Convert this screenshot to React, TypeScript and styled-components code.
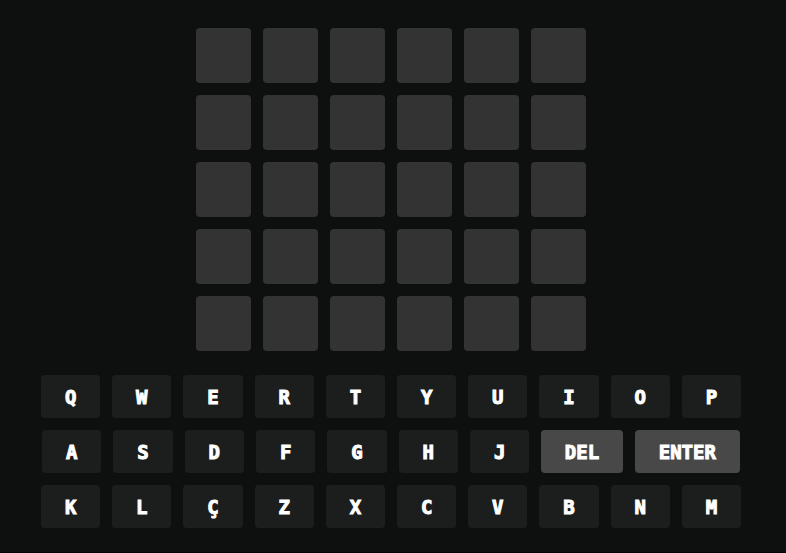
import React from "react";
import styled, { createGlobalStyle } from "styled-components";

const GlobalStyle = createGlobalStyle`
  *, *::before, *::after {
    box-sizing: border-box;
  }

  body {
    margin: 0;
    background: #0e100f;
  }
`;

const Page = styled.main`
  display: flex;
  flex-direction: column;
  align-items: center;
  gap: 24px;
  min-height: 100vh;
  padding: 28px 4px 24px 0;
  border-bottom: 1px solid #050304;
  background: #0e100f;
`;

const Board = styled.section`
  display: flex;
  flex-direction: column;
  gap: 12px;
`;

const BoardRow = styled.div`
  display: flex;
  gap: 12px;
`;

const Tile = styled.div`
  width: 55px;
  height: 55px;
  border-radius: 4px;
  background: #333333;
`;

const Keyboard = styled.section`
  display: flex;
  flex-direction: column;
  align-items: center;
  gap: 12px;
  width: 100%;
`;

const KeyRow = styled.div<{ $maxWidth: number }>`
  display: flex;
  gap: 12px;
  width: 100%;
  max-width: ${({ $maxWidth }) => $maxWidth}px;
`;

const Key = styled.button<{ $basis?: number; $action?: boolean }>`
  display: flex;
  flex: 1 1 ${({ $basis = 59 }) => $basis}px;
  align-items: center;
  justify-content: center;
  min-width: 0;
  height: 43px;
  padding: 0;
  border: 0;
  border-radius: 4px;
  background: ${({ $action }) => ($action ? "#484848" : "#1c1e1d")};
  color: #ffffff;
  font: 700 19px/24px "DejaVu Sans Mono", monospace;
  -webkit-text-stroke: 1px #ffffff;
  cursor: pointer;
`;

type KeyDef = { label: string; basis?: number; action?: boolean };

const letters = (text: string): KeyDef[] => [...text].map((label) => ({ label }));

const keyRows: { maxWidth: number; keys: KeyDef[] }[] = [
  { maxWidth: 700, keys: letters("QWERTYUIOP") },
  {
    maxWidth: 698,
    keys: [
      ...letters("ASDFGHJ"),
      { label: "DEL", basis: 81, action: true },
      { label: "ENTER", basis: 105, action: true },
    ],
  },
  { maxWidth: 700, keys: letters("KLÇZXCVBNM") },
];

const ATTEMPTS = 5;
const WORD_LENGTH = 6;

export default function App() {
  return (
    <>
      <GlobalStyle />
      <Page>
        <Board>
          {Array.from({ length: ATTEMPTS }, (_, row) => (
            <BoardRow key={row}>
              {Array.from({ length: WORD_LENGTH }, (_, column) => (
                <Tile key={column} />
              ))}
            </BoardRow>
          ))}
        </Board>
        <Keyboard>
          {keyRows.map(({ maxWidth, keys }, row) => (
            <KeyRow key={row} $maxWidth={maxWidth}>
              {keys.map(({ label, basis, action }) => (
                <Key key={label} type="button" $basis={basis} $action={action}>
                  {label}
                </Key>
              ))}
            </KeyRow>
          ))}
        </Keyboard>
      </Page>
    </>
  );
}
